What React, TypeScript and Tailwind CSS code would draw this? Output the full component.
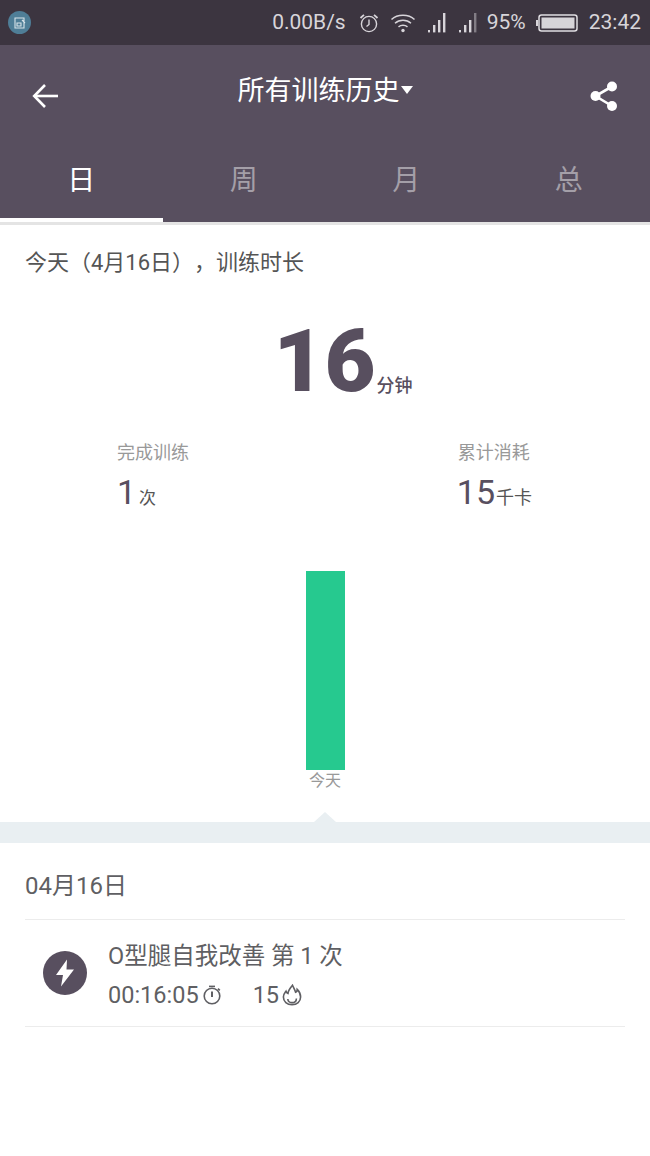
import React from "react";

const FONT = "font-['Roboto','Noto_Sans_CJK_SC',sans-serif]";

function Alarm() {
  return (
    <svg width="22" height="22" viewBox="0 0 22 22" fill="none" stroke="#d8d5da" strokeWidth="1.4">
      <circle cx="11" cy="12" r="7.6" />
      <path d="M11 7.5V12.5L8.5 14.5" />
      <path d="M2.5 6 6 2.8M19.5 6 16 2.8" strokeWidth="1.8" />
    </svg>
  );
}
function Wifi() {
  return (
    <svg width="26" height="22" viewBox="0 0 26 22" fill="none" stroke="#d8d5da" strokeWidth="1.5">
      <path d="M1.5 7.5C7.5 1.8 18.5 1.8 24.5 7.5" />
      <path d="M5 11.2C9.5 7.2 16.5 7.2 21 11.2" />
      <path d="M8.5 14.8C11 12.8 15 12.8 17.5 14.8" />
      <circle cx="13" cy="18.5" r="1.7" fill="#d8d5da" stroke="none" />
    </svg>
  );
}
function Signal({ dim }: { dim?: boolean }) {
  return (
    <svg width="18" height="22" viewBox="0 0 18 22" fill="#d8d5da">
      <rect x="0" y="18" width="2" height="2.4" />
      <rect x="5" y="13" width="2.4" height="7.4" />
      <rect x="10" y="8" width="2.4" height="12.4" />
      <rect x="15" y="1" width="2.4" height="19.4" opacity={dim ? 0.45 : 1} />
    </svg>
  );
}
function Battery() {
  return (
    <svg width="43" height="20" viewBox="0 0 43 20">
      <rect x="0" y="7" width="2" height="6" fill="#d8d5da" />
      <rect x="3" y="2" width="38" height="16" rx="2.5" fill="none" stroke="#e0dee2" strokeWidth="1.5" />
      <rect x="5.5" y="4.5" width="33" height="11" fill="#d6d4d8" />
    </svg>
  );
}
function ArrowBack() {
  return (
    <svg width="28" height="28" viewBox="0 0 28 28" fill="none" stroke="#fff" strokeWidth="2.6">
      <path d="M27 14H3.5" />
      <path d="M14 3 3.2 14 14 25" />
    </svg>
  );
}
function Share() {
  return (
    <svg width="28" height="30" viewBox="0 0 28 30" fill="#fff">
      <circle cx="22" cy="5.5" r="5" />
      <circle cx="5.5" cy="15" r="5" />
      <circle cx="22" cy="25" r="5" />
      <path d="M22 5.5 5.5 15 22 25" fill="none" stroke="#fff" strokeWidth="2.6" />
    </svg>
  );
}
function Bolt() {
  return (
    <svg width="20" height="28" viewBox="0 0 20 28" fill="#fff">
      <path d="M12 0.5 1 16h7l-2 11.5L19 10.5h-7.5z" />
    </svg>
  );
}
function Timer() {
  return (
    <svg width="20" height="20" viewBox="0 0 20 20" fill="none" stroke="#5f5f63" strokeWidth="1.6">
      <circle cx="10" cy="11" r="7.8" />
      <path d="M10 6.5V12" strokeWidth="2" />
      <path d="M7 1.4H13" />
      <path d="M16 3.6 17.8 5.4" />
    </svg>
  );
}
function Flame() {
  return (
    <svg width="20" height="22" viewBox="0 0 20 22" fill="none" stroke="#5f5f63" strokeWidth="1.6">
      <path d="M10.5 1.2C11.8 4.2 12.8 5.6 13.6 8.2 14.8 7.6 15.2 6.6 15.2 5.4 17.4 7.6 18.6 10.4 18.6 13 18.6 17.6 15 20.6 10 20.6S1.4 17.6 1.4 13C1.4 10.4 2.8 8.8 4 7.2 4.4 8.4 5 9 6 9.4 6.2 6 8.4 3.8 10.5 1.2Z" />
      <path d="M5.8 15C6 17.4 7.8 18.6 10 18.6 12.4 18.6 14.4 17 14.4 14.4" />
    </svg>
  );
}

export default function App() {
  return (
    <div className={`${FONT} w-[650px] h-[1156px] bg-white flex flex-col overflow-hidden`}>
      <div className="h-[45px] shrink-0 bg-[#3c3540] flex items-center pl-[8px] pr-[9px] text-[#d8d5da] text-[21px]">
        <div className="w-[23px] h-[23px] rounded-full bg-[#4f7e97] flex items-center justify-center">
          <svg width="12" height="12" viewBox="0 0 12 12" fill="none" stroke="#d9e4ea" strokeWidth="1.1">
            <path d="M1 1h9v10H1zM3 6h4v3H3zM8 3l3 3" />
          </svg>
        </div>
        <div className="ml-auto flex items-center">
          <span>0.00B/s</span>
          <span className="ml-[12px] flex"><Alarm /></span>
          <span className="ml-[10px] flex"><Wifi /></span>
          <span className="ml-[12px] flex"><Signal /></span>
          <span className="ml-[13px] flex"><Signal dim /></span>
          <span className="ml-[10px]">95%</span>
          <span className="ml-[10px] flex"><Battery /></span>
          <span className="ml-[10px]">23:42</span>
        </div>
      </div>

      <div className="h-[177px] shrink-0 bg-[#584f5f] flex flex-col">
        <div className="h-[102px] flex items-center justify-between pl-[31px] pr-[32px]">
          <ArrowBack />
          <div className="flex items-center text-white text-[27px] mt-[-9px] ml-[1px]">
            所有训练历史
            <svg width="12" height="8" viewBox="0 0 12 8" fill="#fff" className="ml-[1px] mt-[-3px]"><path d="M0 0h12L6 8z" /></svg>
          </div>
          <Share />
        </div>
        <div className="flex-1 grid grid-cols-4 text-[28px]">
          <div className="flex items-center justify-center text-white border-b-[4px] border-white pb-[4px]">日</div>
          <div className="flex items-center justify-center text-[#a49fa8] pb-[8px]">周</div>
          <div className="flex items-center justify-center text-[#a49fa8] pb-[8px]">月</div>
          <div className="flex items-center justify-center text-[#a49fa8] pb-[8px]">总</div>
        </div>
      </div>
      <div className="h-[3px] shrink-0 bg-[#e4e4e4]" />

      <div className="pl-[25px] pt-[23px] text-[22px] leading-[30px] text-[#555] [text-spacing-trim:space-all]">今天（4月16日），训练时长</div>

      <div className="flex items-end justify-center mt-[39px] h-[90px] text-[#584f5f] ml-[36px]">
        <span className="text-[88px] leading-[92px] font-black">16</span>
        <span className="text-[18px] leading-[24px] font-medium mb-[9px] ml-[1px]">分钟</span>
      </div>

      <div className="flex justify-between pl-[117px] pr-[118px] mt-[33px]">
        <div className="flex flex-col">
          <span className="text-[18px] leading-[26px] text-[#999]">完成训练</span>
          <span className="flex items-end text-[#584f5f] mt-[8px] h-[36px]">
            <span className="text-[34px] leading-[36px]">1</span>
            <span className="text-[17px] leading-[24px] ml-[3px] text-[#555]">次</span>
          </span>
        </div>
        <div className="flex flex-col">
          <span className="text-[18px] leading-[26px] text-[#999]">累计消耗</span>
          <span className="flex items-end text-[#584f5f] mt-[8px] h-[36px] ml-[-1px]">
            <span className="text-[34px] leading-[36px]">15</span>
            <span className="text-[18px] leading-[24px] ml-[1px] text-[#555]">千卡</span>
          </span>
        </div>
      </div>

      <div className="flex flex-col items-center mt-[61px] relative">
        <div className="w-[39px] h-[199px] bg-[#26c98f]" />
        <div className="text-[16px] leading-[22px] text-[#999]">今天</div>
      </div>

      <div className="relative mt-[30px] h-[21px] shrink-0 bg-[#e9eff2]">
        <div className="absolute left-[314px] top-[-10px] w-0 h-0 border-l-[11px] border-r-[11px] border-b-[10px] border-l-transparent border-r-transparent border-b-[#e9eff2]" />
      </div>

      <div className="pl-[25px] pr-[25px]">
        <div className="h-[77px] flex items-center text-[24px] text-[#5f5f63] border-b border-[#ececec] pt-[10px]">04月16日</div>
        <div className="h-[107px] flex items-center border-b border-[#ececec]">
          <div className="w-[44px] h-[44px] ml-[18px] rounded-full bg-[#584f5f] flex items-center justify-center">
            <Bolt />
          </div>
          <div className="ml-[21px] mt-[4px] flex flex-col text-[#5f5f63]">
            <div className="text-[23.5px] leading-[32px]">O型腿自我改善 第 1 次</div>
            <div className="flex items-center mt-[7px] text-[23.5px] leading-[32px]">
              <span>00:16:05</span>
              <span className="ml-[3px] flex"><Timer /></span>
              <span className="ml-[31px]">15</span>
              <span className="ml-[3px] flex"><Flame /></span>
            </div>
          </div>
        </div>
      </div>
    </div>
  );
}
